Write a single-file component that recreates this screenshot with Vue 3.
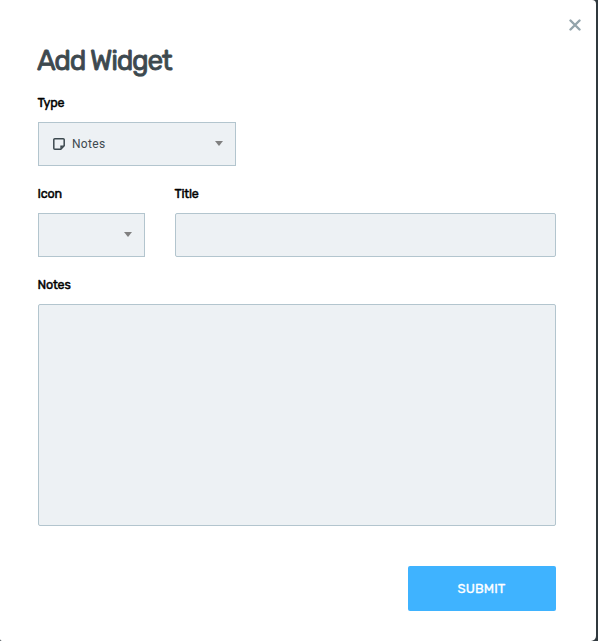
<script setup>
import { ref } from 'vue'

const title = ref('')
const notes = ref('')
</script>

<template>
  <div class="backdrop">
    <form class="modal" @submit.prevent>
      <button class="close" type="button" aria-label="Close">
        <svg width="12" height="12" viewBox="0 0 12 12"><path d="M1.5 1.5l9 9M10.5 1.5l-9 9" /></svg>
      </button>
      <h1>Add Widget</h1>

      <div class="field type">
        <label>Type</label>
        <div class="select">
          <svg class="note" width="12" height="12" viewBox="0 0 12 12">
            <path d="M1.8 .8h8.4a1 1 0 0 1 1 1v6L7.8 11.2h-6a1 1 0 0 1-1-1V1.8a1 1 0 0 1 1-1z" />
            <path class="fold" d="M7.3 11V7.4H11z" />
          </svg>
          <span class="value">Notes</span>
          <svg class="caret" width="8" height="5" viewBox="0 0 8 5"><path d="M0 0h8L4 5z" /></svg>
        </div>
      </div>

      <div class="row">
        <div class="field icon">
          <label>Icon</label>
          <div class="select">
            <svg class="caret" width="8" height="5" viewBox="0 0 8 5"><path d="M0 0h8L4 5z" /></svg>
          </div>
        </div>
        <div class="field grow">
          <label>Title</label>
          <input v-model="title" type="text" />
        </div>
      </div>

      <div class="field">
        <label>Notes</label>
        <textarea v-model="notes"></textarea>
      </div>

      <button class="submit" type="submit"><span>SUBMIT</span></button>
    </form>
  </div>
</template>

<style>
body {
  background: #30393e;
  overflow: hidden;
}
</style>

<style scoped>
* {
  box-sizing: border-box;
}
.backdrop {
  height: 641px;
  padding-right: 2px;
  background: #30393e;
}
.modal {
  position: relative;
  display: flex;
  flex-direction: column;
  height: 641px;
  padding: 43px 40px 0 38px;
  background: #fff;
  border-radius: 0 4px 5px 2px;
  font-family: Rubik, Roboto, sans-serif;
}
.close {
  position: absolute;
  top: 19px;
  right: 15px;
  width: 12px;
  height: 12px;
  padding: 0;
  border: 0;
  background: none;
}
.close svg {
  display: block;
  fill: none;
  stroke: #93a4ab;
  stroke-width: 2.4;
  stroke-linecap: round;
}
h1 {
  margin: 0 0 18px -1px;
  padding-top: 1px;
  font-size: 28px;
  line-height: 34px;
  font-weight: 400;
  letter-spacing: -1.3px;
  color: #3d494f;
  -webkit-text-stroke: 0.8px #3d494f;
}
.field {
  display: flex;
  flex-direction: column;
  margin-bottom: 21px;
}
label {
  height: 14px;
  margin: 0 0 12px -0.5px;
  font-size: 12.5px;
  line-height: 14px;
  font-weight: 400;
  letter-spacing: -0.2px;
  color: #000;
  -webkit-text-stroke: 0.45px #000;
}
.type {
  width: 198px;
}
.select {
  display: flex;
  align-items: center;
  height: 44px;
  padding: 0 12px 0 14px;
  border: 1px solid #b3c5ce;
  background: #edf1f4;
}
.note {
  fill: none;
  stroke: #3d494f;
  stroke-width: 1.5;
}
.note .fold {
  fill: #3d494f;
  stroke: none;
}
.value {
  margin-left: 7px;
  font-family: Roboto, sans-serif;
  font-size: 12px;
  line-height: 16px;
  font-weight: 400;
  letter-spacing: 0.3px;
  color: #3d494f;
}
.caret {
  margin: 0 0 1px auto;
  fill: #808080;
}
.row {
  display: flex;
  gap: 30px;
}
.icon {
  width: 107px;
}
.grow {
  flex: 1;
}
input,
textarea {
  display: block;
  width: 100%;
  height: 44px;
  margin: 0;
  padding: 0 14px;
  border: 1px solid #b3c5ce;
  border-radius: 2px;
  outline: 0;
  background: #edf1f4;
  font: inherit;
  font-size: 12px;
}
textarea {
  height: 222px;
  padding: 14px;
  resize: none;
}
.submit {
  align-self: flex-end;
  width: 148px;
  height: 45px;
  margin-top: 19px;
  padding: 0 1px 0 0;
  border: 0;
  border-radius: 2px;
  background: #3fb3ff;
  color: #fff;
  font-family: inherit;
  font-size: 13px;
  font-weight: 400;
  letter-spacing: 0.1px;
  -webkit-text-stroke: 0.3px #fff;
}
</style>
